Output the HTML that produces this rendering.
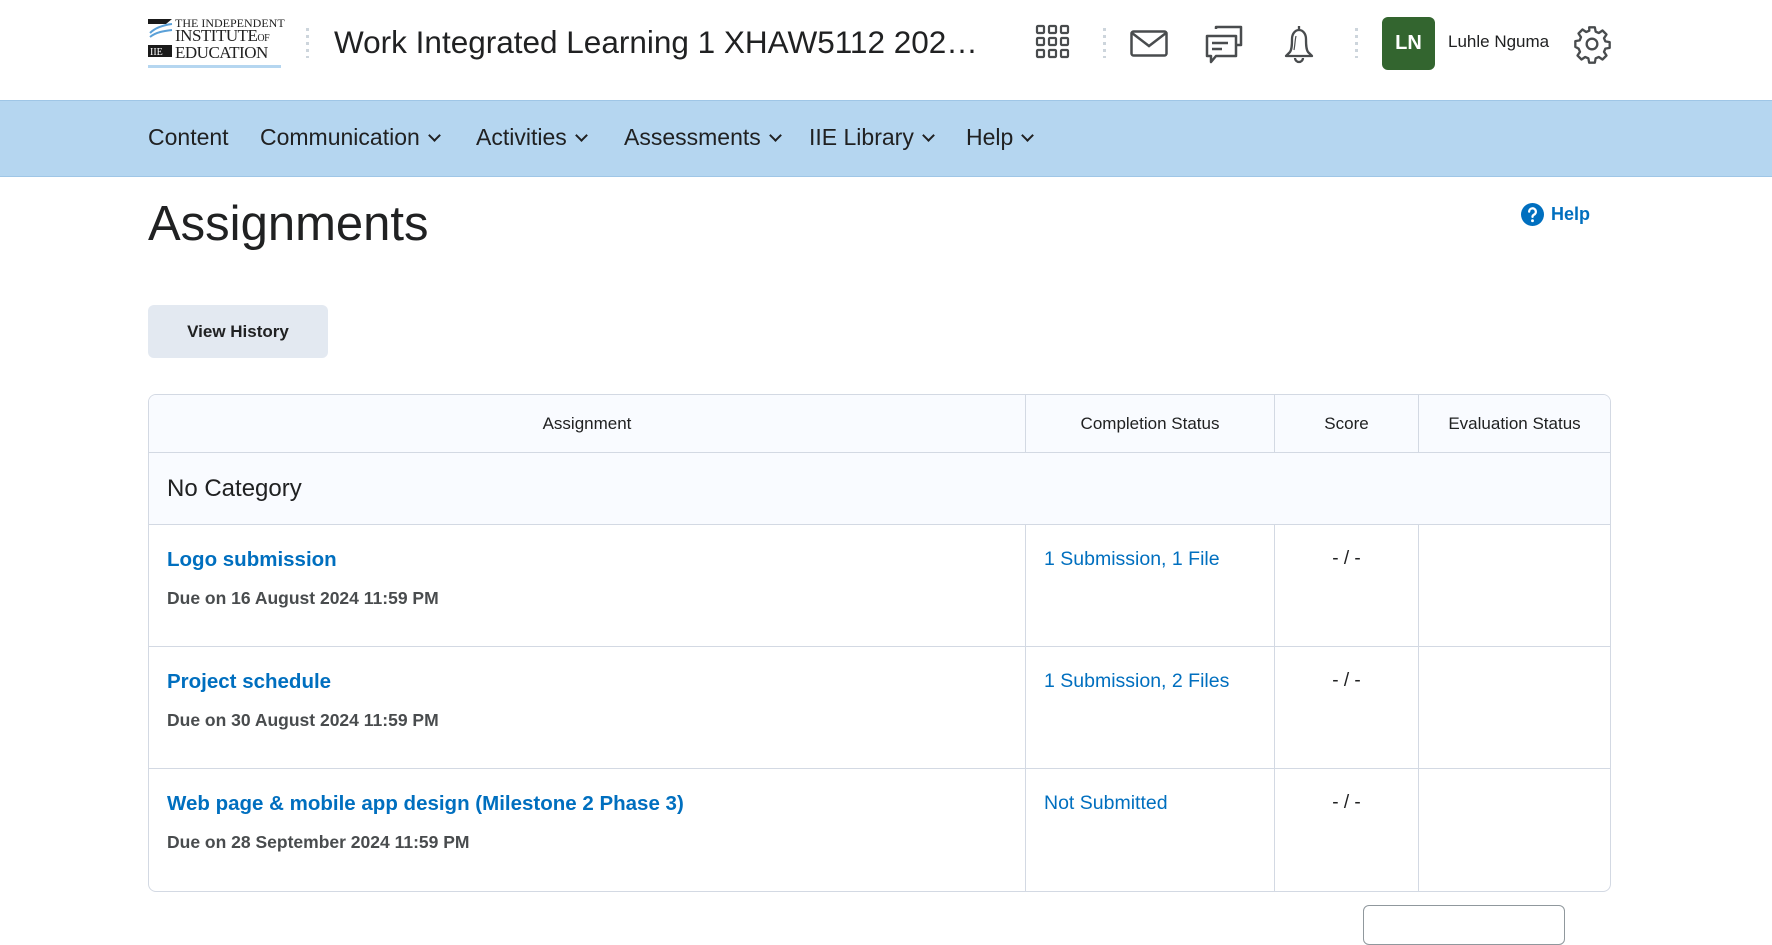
<!DOCTYPE html>
<html><head><meta charset="utf-8"><style>
*{box-sizing:border-box;margin:0;padding:0}
body{width:1772px;height:922px;overflow:hidden;background:#fff;font-family:"Liberation Sans",sans-serif;color:#202122;position:relative}
.a{position:absolute;white-space:nowrap}
.nav{position:absolute;left:0;top:100px;width:1772px;height:77px;background:#b5d6f0;border-top:1px solid #9fc6e6;border-bottom:1px solid #9fc6e6}
.nav span{position:absolute;top:23px;font-size:23px;color:#202122}
.chev{display:inline-block;width:9px;height:9px;border-right:2.5px solid #202122;border-bottom:2.5px solid #202122;transform:rotate(45deg);margin-left:10px;position:relative;top:-5px}
.dots{position:absolute;width:3px;height:30px;background:repeating-linear-gradient(#cdd5dc 0 3px,transparent 3px 7px)}
table{position:absolute;left:148px;top:394px;width:1463px;border-collapse:separate;border-spacing:0;border:1px solid #d3d9e3;border-radius:8px;overflow:hidden}
td,th{border-bottom:1px solid #d3d9e3;border-right:1px solid #d3d9e3;vertical-align:top}
tr td:last-child,tr th:last-child{border-right:none}
tr:last-child td{border-bottom:none}
th{height:58px;font-weight:normal;font-size:17px;background:#f9fbff;vertical-align:middle;color:#202122}
.cat td{height:72px;background:#f9fbff;font-size:24px;padding-left:18px;vertical-align:middle}
.row td{height:122px}
.l{color:#006fbf;font-size:20.5px;font-weight:bold;display:block;margin:23px 0 0 18px}
.d{font-size:17.5px;font-weight:bold;color:#494c4e;display:block;margin:16px 0 0 18px}
.s{color:#006fbf;font-size:19.5px;display:block;margin:23px 0 0 18px}
.sc{text-align:center;font-size:19px;padding-top:23px}
</style></head><body>
<div class="a" style="left:148px;top:17px;width:133px;height:52px">
<svg width="26" height="38" viewBox="0 0 26 38" style="position:absolute;left:0;top:2px"><path d="M0 0h24l-6 5H0z" fill="#1a1a1a"/><path d="M2 14c6-6 14-8 22-9M2 18c6-5 14-6 22-7" stroke="#5aa0d8" stroke-width="2" fill="none"/><rect x="0" y="26" width="24" height="12" fill="#1a1a1a"/><text x="2" y="36" font-size="10" fill="#fff" font-family="Liberation Serif">IIE</text></svg>
<div class="a" style="left:27px;top:-1px;font-family:'Liberation Serif',serif;font-size:12px;color:#222">THE INDEPENDENT</div>
<div class="a" style="left:27px;top:9px;font-family:'Liberation Serif',serif;font-size:17px;color:#222;letter-spacing:-0.5px">INSTITUTE<span style="font-size:10px">OF</span></div>
<div class="a" style="left:27px;top:26px;font-family:'Liberation Serif',serif;font-size:17px;color:#222;letter-spacing:-0.5px">EDUCATION</div>
<div class="a" style="left:0;top:48px;width:133px;height:3px;background:#b5d6f0"></div>
</div>
<div class="dots" style="left:306px;top:28px"></div>
<div class="a" style="left:334px;top:24px;font-size:31.5px;color:#202122">Work Integrated Learning 1 XHAW5112 202…</div>
<svg class="a" style="left:1035px;top:24px" width="36" height="36" viewBox="0 0 36 36" fill="none" stroke="#494c4e" stroke-width="2.2"><g><rect x="2" y="2" width="7" height="7" rx="1"/><rect x="14" y="2" width="7" height="7" rx="1"/><rect x="26" y="2" width="7" height="7" rx="1"/><rect x="2" y="14" width="7" height="7" rx="1"/><rect x="14" y="14" width="7" height="7" rx="1"/><rect x="26" y="14" width="7" height="7" rx="1"/><rect x="2" y="26" width="7" height="7" rx="1"/><rect x="14" y="26" width="7" height="7" rx="1"/><rect x="26" y="26" width="7" height="7" rx="1"/></g></svg>
<div class="dots" style="left:1103px;top:28px"></div>
<svg class="a" style="left:1130px;top:30px" width="38" height="27" viewBox="0 0 38 27" fill="none" stroke="#494c4e" stroke-width="2.5"><rect x="1.5" y="1.5" width="35" height="24" rx="2"/><path d="M2 3l17 13 17-13"/></svg>
<svg class="a" style="left:1204px;top:24px" width="40" height="40" viewBox="0 0 40 40" fill="none" stroke="#494c4e" stroke-width="2.5" stroke-linejoin="round"><path d="M12 5V3h25v18h-4"/><path d="M3 12h29v20H12l-5 6v-6H3z"/><path d="M8 19h16M8 25h10"/></svg>
<svg class="a" style="left:1280px;top:24px" width="38" height="40" viewBox="0 0 38 40" fill="none" stroke="#494c4e" stroke-width="2.3" stroke-linejoin="round"><path d="M19 2v4M10 28c2-3 2-8 2-13 0-5 3-9 7-9s7 4 7 9c0 5 0 10 2 13l4 4H6z"/><path d="M15 34a4 4 0 0 0 8 0"/><path d="M16 12c-1 4-1 9-2 14" stroke-width="1.2"/></svg>
<div class="dots" style="left:1355px;top:28px"></div>
<div class="a" style="left:1382px;top:17px;width:53px;height:53px;background:#33652f;border-radius:6px;color:#fff;font-weight:bold;font-size:20px;text-align:center;line-height:53px">LN</div>
<div class="a" style="left:1448px;top:32px;font-size:17px;color:#202122">Luhle Nguma</div>
<svg class="a" style="left:1572px;top:24px" width="40" height="40" viewBox="0 0 24 24" fill="none" stroke="#494c4e" stroke-width="1.4" stroke-linejoin="round"><circle cx="12" cy="12" r="3.2"/><path d="M10.3 2h3.4l.5 2.6 1.9.8 2.2-1.5 2.4 2.4-1.5 2.2.8 1.9 2.6.5v3.4l-2.6.5-.8 1.9 1.5 2.2-2.4 2.4-2.2-1.5-1.9.8-.5 2.6h-3.4l-.5-2.6-1.9-.8-2.2 1.5-2.4-2.4 1.5-2.2-.8-1.9L2 13.7v-3.4l2.6-.5.8-1.9-1.5-2.2 2.4-2.4 2.2 1.5 1.9-.8z"/></svg>
<div class="nav">
<span style="left:148px">Content</span>
<span style="left:260px">Communication<i class="chev"></i></span>
<span style="left:476px">Activities<i class="chev"></i></span>
<span style="left:624px">Assessments<i class="chev"></i></span>
<span style="left:809px">IIE Library<i class="chev"></i></span>
<span style="left:966px">Help<i class="chev"></i></span>
</div>
<div class="a" style="left:148px;top:196px;font-size:49px;color:#202122">Assignments</div>
<svg class="a" style="left:1521px;top:203px" width="23" height="23" viewBox="0 0 24 24"><circle cx="12" cy="12" r="12" fill="#006fbf"/><path d="M8.5 9a3.5 3.5 0 1 1 5 3.2c-1 .5-1.5 1.2-1.5 2.3" stroke="#fff" stroke-width="2.4" fill="none" stroke-linecap="round"/><circle cx="12" cy="18.5" r="1.5" fill="#fff"/></svg>
<div class="a" style="left:1551px;top:204px;font-size:18px;font-weight:bold;color:#006fbf">Help</div>
<div class="a" style="left:148px;top:305px;width:180px;height:53px;background:#e3e9f1;border-radius:6px;font-size:17px;font-weight:bold;text-align:center;line-height:53px;color:#202122">View History</div>
<table>
<tr><th style="width:877px">Assignment</th><th style="width:249px">Completion Status</th><th style="width:144px">Score</th><th>Evaluation Status</th></tr>
<tr class="cat"><td colspan="4">No Category</td></tr>
<tr class="row"><td><span class="l">Logo submission</span><span class="d">Due on 16 August 2024 11:59 PM</span></td><td><span class="s">1 Submission, 1 File</span></td><td class="sc">- / -</td><td></td></tr>
<tr class="row"><td><span class="l">Project schedule</span><span class="d">Due on 30 August 2024 11:59 PM</span></td><td><span class="s">1 Submission, 2 Files</span></td><td class="sc">- / -</td><td></td></tr>
<tr class="row"><td><span class="l">Web page &amp; mobile app design (Milestone 2 Phase 3)</span><span class="d">Due on 28 September 2024 11:59 PM</span></td><td><span class="s">Not Submitted</span></td><td class="sc">- / -</td><td></td></tr>
</table>
<div class="a" style="left:1363px;top:905px;width:202px;height:40px;border:1px solid #90989d;border-radius:6px;background:#fff"></div>
</body></html>
